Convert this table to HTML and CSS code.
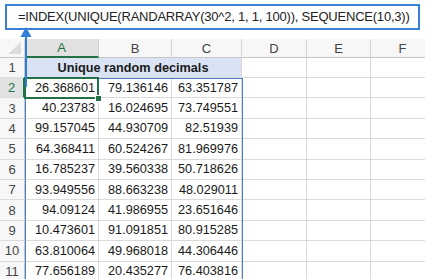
FILE: index.html
```html
<!DOCTYPE html>
<html>
<head>
<meta charset="utf-8">
<link rel="stylesheet" href="styles.css">
</head>
<body>
<div class="page">
  <div class="formula">=INDEX(UNIQUE(RANDARRAY(30^2, 1, 1, 100)), SEQUENCE(10,3))</div>
  <div class="sheet">
    <div class="corner"><span class="tri"></span></div>
    <div class="ch ch-sel">A</div><div class="ch">B</div><div class="ch">C</div><div class="ch">D</div><div class="ch">E</div><div class="ch">F</div><div class="ch"></div>

    <div class="rh">1</div><div class="c title">Unique random decimals</div><div class="c"></div><div class="c"></div><div class="c"></div><div class="c"></div>
    <div class="rh rh-sel">2</div><div class="c n">26.368601</div><div class="c n">79.136146</div><div class="c n">63.351787</div><div class="c"></div><div class="c"></div><div class="c"></div><div class="c"></div>
    <div class="rh">3</div><div class="c n">40.23783</div><div class="c n">16.024695</div><div class="c n">73.749551</div><div class="c"></div><div class="c"></div><div class="c"></div><div class="c"></div>
    <div class="rh">4</div><div class="c n">99.157045</div><div class="c n">44.930709</div><div class="c n">82.51939</div><div class="c"></div><div class="c"></div><div class="c"></div><div class="c"></div>
    <div class="rh">5</div><div class="c n">64.368411</div><div class="c n">60.524267</div><div class="c n">81.969976</div><div class="c"></div><div class="c"></div><div class="c"></div><div class="c"></div>
    <div class="rh">6</div><div class="c n">16.785237</div><div class="c n">39.560338</div><div class="c n">50.718626</div><div class="c"></div><div class="c"></div><div class="c"></div><div class="c"></div>
    <div class="rh">7</div><div class="c n">93.949556</div><div class="c n">88.663238</div><div class="c n">48.029011</div><div class="c"></div><div class="c"></div><div class="c"></div><div class="c"></div>
    <div class="rh">8</div><div class="c n">94.09124</div><div class="c n">41.986955</div><div class="c n">23.651646</div><div class="c"></div><div class="c"></div><div class="c"></div><div class="c"></div>
    <div class="rh">9</div><div class="c n">10.473601</div><div class="c n">91.091851</div><div class="c n">80.915285</div><div class="c"></div><div class="c"></div><div class="c"></div><div class="c"></div>
    <div class="rh">10</div><div class="c n">63.810064</div><div class="c n">49.968018</div><div class="c n">44.306446</div><div class="c"></div><div class="c"></div><div class="c"></div><div class="c"></div>
    <div class="rh">11</div><div class="c n">77.656189</div><div class="c n">20.435277</div><div class="c n">76.403816</div><div class="c"></div><div class="c"></div><div class="c"></div><div class="c"></div>

    <div class="spill"></div>
    <div class="active"><span class="handle"></span></div>
  </div>
  <svg class="arrow" width="14" height="60" viewBox="0 0 14 60">
    <line x1="7" y1="6" x2="7" y2="60" stroke="#2f7ed8" stroke-width="2"/>
    <polygon points="7,0 1.5,10 12.5,10" fill="#2f7ed8"/>
  </svg>
</div>
</body>
</html>
```

FILE: styles.css
```css
html, body {
  margin: 0;
  padding: 0;
  background: #ffffff;
  overflow: hidden;
}
.page {
  position: relative;
  width: 425px;
  height: 279px;
  overflow: hidden;
  font-family: "Liberation Sans", Arial, sans-serif;
  color: #222;
}
.formula {
  margin: 4px 5px 0 5px;
  height: 22px;
  border: 2px solid #3a80d6;
  padding-left: 11px;
  font-size: 13px;
  letter-spacing: -0.22px;
  line-height: 22px;
  color: #222;
  white-space: nowrap;
}
.sheet {
  position: relative;
  margin-top: 9px;
  display: grid;
  grid-template-columns: 25px 74px 73px 70px 65px 64px 64px 40px;
  grid-template-rows: 19px 20px repeat(10, 20.4px);
  font-size: 12.7px;
}
.corner {
  position: relative;
  background: #f7f7f7;
  border-right: 1px solid #d4d4d4;
  border-bottom: 1px solid #c6c6c6;
}
.tri {
  position: absolute;
  right: 3px;
  bottom: 3px;
  width: 0;
  height: 0;
  border-left: 13px solid transparent;
  border-bottom: 12px solid #dcdcdc;
}
.ch {
  background: #f7f7f7;
  border-right: 1px solid #d4d4d4;
  border-bottom: 1px solid #c6c6c6;
  display: flex;
  align-items: center;
  justify-content: center;
  color: #444;
  font-size: 13px;
}
.ch-sel {
  background: #e1e1e1;
  border-bottom: 2px solid #217346;
  color: #217346;
}
.rh {
  background: #f7f7f7;
  border-right: 1px solid #c6c6c6;
  border-bottom: 1px solid #dcdcdc;
  display: flex;
  align-items: center;
  justify-content: center;
  color: #444;
  font-size: 13px;
}
.rh-sel {
  background: #e1e1e1;
  border-right: 2px solid #217346;
  color: #217346;
}
.c {
  border-right: 1px solid #dadada;
  border-bottom: 1px solid #dadada;
  display: flex;
  align-items: center;
  white-space: nowrap;
}
.n {
  justify-content: flex-end;
  padding-right: 3px;
  color: #1a1a1a;
}
.title {
  grid-column: span 3;
  background: #dae3f3;
  justify-content: center;
  font-weight: bold;
  color: #1a1a1a;
}
.spill {
  position: absolute;
  left: 25px;
  top: 39px;
  width: 216px;
  height: 210px;
  border: 1px solid #4a7fcb;
  pointer-events: none;
}
.active {
  position: absolute;
  left: 24px;
  top: 38px;
  width: 71px;
  height: 18px;
  border: 2px solid #217346;
}
.handle {
  position: absolute;
  right: -5px;
  bottom: -5px;
  width: 5px;
  height: 5px;
  background: #217346;
  border: 1px solid #fff;
}
.arrow {
  position: absolute;
  left: 19px;
  top: 27px;
}
```
